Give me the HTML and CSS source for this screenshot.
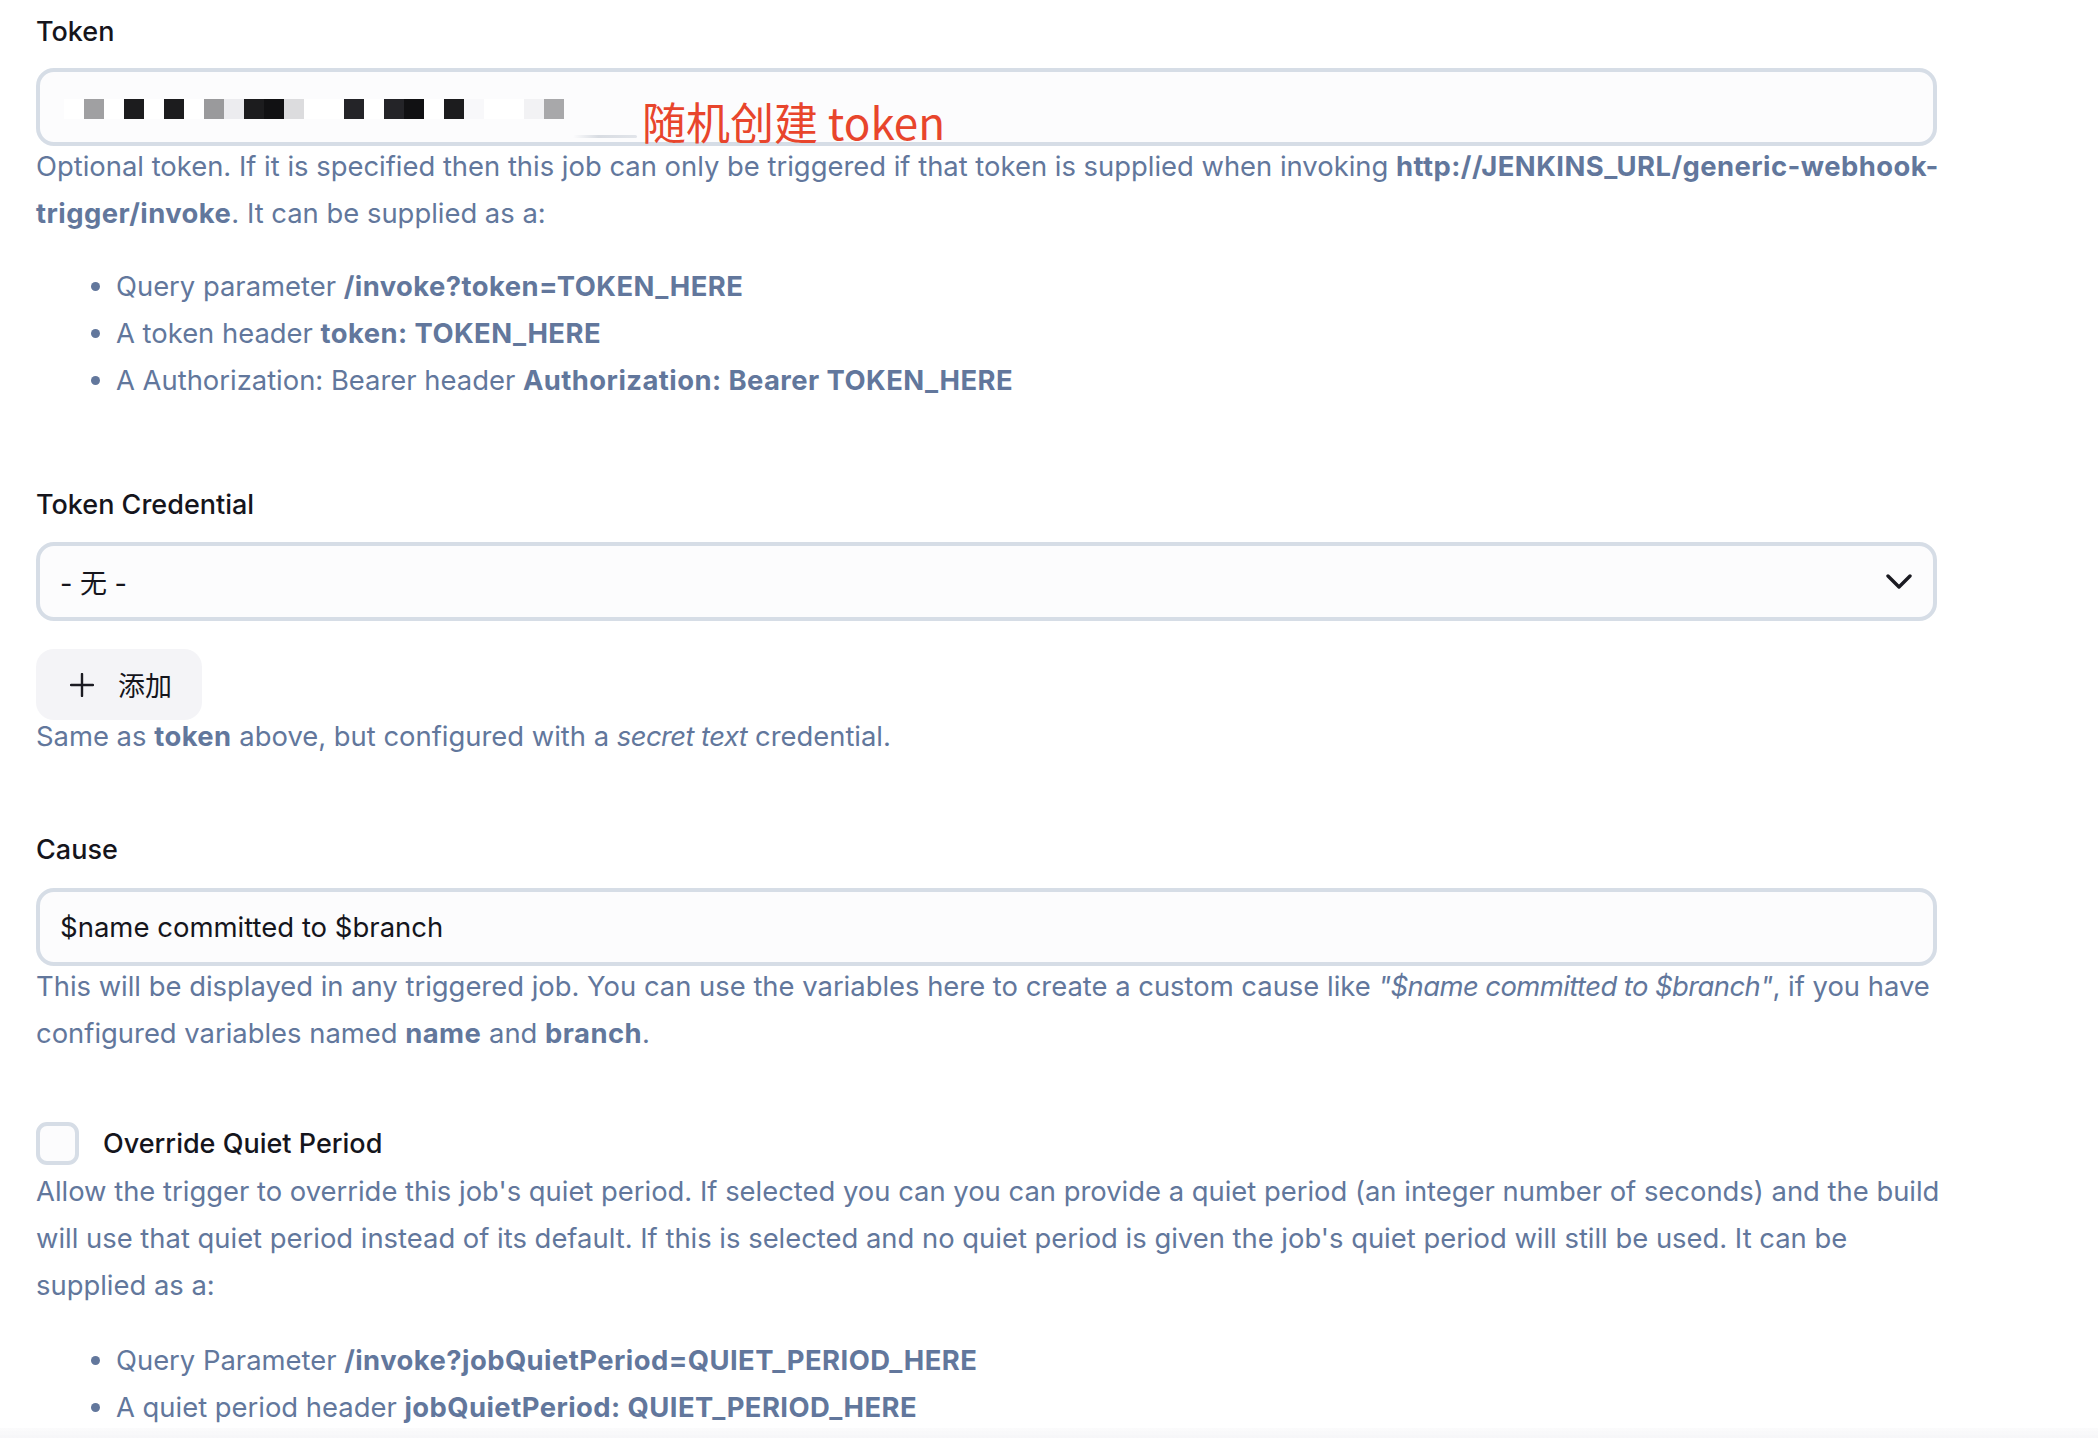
FILE: index.html
```html
<!DOCTYPE html>
<html lang="en">
<head>
<meta charset="utf-8">
<title>Generic Webhook Trigger</title>
<link rel="stylesheet" href="styles.css">
</head>
<body>
<main class="page">
  <section class="field field-token">
    <div class="label">Token</div>
    <div class="input token-input">
      <div class="mosaic">
        <span class="cell w"></span><span class="cell g"></span><span class="cell w"></span><span class="cell k"></span><span class="cell w"></span><span class="cell k"></span><span class="cell w"></span><span class="cell g2"></span><span class="cell l"></span><span class="cell k"></span><span class="cell kk"></span><span class="cell l2"></span><span class="cell w"></span><span class="cell w"></span><span class="cell k2"></span><span class="cell w"></span><span class="cell k2"></span><span class="cell kk"></span><span class="cell w"></span><span class="cell k"></span><span class="cell l3"></span><span class="cell w"></span><span class="cell w"></span><span class="cell l4"></span><span class="cell g3"></span>
      </div>
      <span class="smear"></span>
      <span class="annot">随机创建 token</span>
    </div>
    <div class="help">
      <p>Optional token. If it is specified then this job can only be triggered if that token is supplied when invoking <b>http://JENKINS_URL/generic-webhook-</b><br><b>trigger/invoke</b>. It can be supplied as a:</p>
      <ul>
        <li>Query parameter <b>/invoke?token=TOKEN_HERE</b></li>
        <li>A token header <b>token: TOKEN_HERE</b></li>
        <li>A Authorization: Bearer header <b>Authorization: Bearer TOKEN_HERE</b></li>
      </ul>
    </div>
  </section>

  <section class="field field-credential">
    <div class="label">Token Credential</div>
    <div class="input select">
      <span class="select-value">- 无 -</span>
      <svg class="chevron" width="26" height="16" viewBox="0 0 26 16"><path d="M2 2 L13 13 L24 2" fill="none" stroke="#1b1b22" stroke-width="3.4" stroke-linecap="round" stroke-linejoin="round"/></svg>
    </div>
    <button class="add-btn" type="button">
      <svg class="plus" width="24" height="24" viewBox="0 0 24 24"><path d="M12 1 V23 M1 12 H23" fill="none" stroke="#1b1b22" stroke-width="2.4" stroke-linecap="round"/></svg>
      <span>添加</span>
    </button>
    <div class="help help-tight">
      <p>Same as <b>token</b> above, but configured with a <i>secret text</i> credential.</p>
    </div>
  </section>

  <section class="field field-cause">
    <div class="label">Cause</div>
    <div class="input cause-input">$name committed to $branch</div>
    <div class="help">
      <p>This will be displayed in any triggered job. You can use the variables here to create a custom cause like <i>"$name committed to $branch"</i>, if you have<br>configured variables named <b>name</b> and <b>branch</b>.</p>
    </div>
  </section>

  <section class="field field-quiet">
    <label class="check-row">
      <span class="checkbox"></span>
      <span class="check-label">Override Quiet Period</span>
    </label>
    <div class="help help-check">
      <p>Allow the trigger to override this job's quiet period. If selected you can you can provide a quiet period (an integer number of seconds) and the build<br>will use that quiet period instead of its default. If this is selected and no quiet period is given the job's quiet period will still be used. It can be<br>supplied as a:</p>
      <ul class="list-quiet">
        <li>Query Parameter <b>/invoke?jobQuietPeriod=QUIET_PERIOD_HERE</b></li>
        <li>A quiet period header <b>jobQuietPeriod: QUIET_PERIOD_HERE</b></li>
      </ul>
    </div>
  </section>
</main>
<div class="bottom-fade"></div>
</body>
</html>
```

FILE: styles.css
```css
html, body {
  margin: 0;
  padding: 0;
  background: #ffffff;
}

.page {
  width: 1901px;
  padding: 14px 0 0 36px;
  font-family: Inter, "Noto Sans CJK SC", sans-serif;
  color: #15151c;
}

.label {
  font-size: 27px;
  line-height: 36px;
  font-weight: 500;
  color: #15151c;
}

.input {
  position: relative;
  box-sizing: border-box;
  height: 78px;
  border: 4px solid #d6dde6;
  border-radius: 18px;
  background: #fcfcfd;
  display: flex;
  align-items: center;
  padding: 0 20px;
  font-size: 27.5px;
  color: #15151c;
}

.token-input {
  margin-top: 18px;
  height: 78px;
  padding-left: 24px;
}

.mosaic {
  display: flex;
  margin-top: 3px;
  background: #ffffff;
}

.cell {
  width: 20px;
  height: 20px;
}
.cell.w { background: #ffffff; }
.cell.g { background: #a0a0a2; }
.cell.g2 { background: #9a9a9c; }
.cell.g3 { background: #a8a8aa; }
.cell.k { background: #1c1c1e; }
.cell.k2 { background: #242428; }
.cell.kk { background: #111113; }
.cell.l { background: #ececef; }
.cell.l2 { background: #dcdcde; }
.cell.l3 { background: #f8f8fa; }
.cell.l4 { background: #f2f2f4; }

.smear {
  position: absolute;
  left: 533px;
  top: 63px;
  width: 64px;
  height: 3px;
  border-radius: 2px;
  background: linear-gradient(90deg, rgba(210,214,220,0), #d8dce2 40%, #e2e5ea);
}

.annot {
  position: absolute;
  left: 602px;
  top: 25px;
  font-family: "Noto Sans CJK SC", sans-serif;
  font-size: 44px;
  line-height: 48px;
  color: #e8452c;
  white-space: nowrap;
}

.help {
  font-size: 27.4px;
  line-height: 47px;
  color: #62779c;
  margin-top: -3px;
}

.help p {
  margin: 0;
  white-space: nowrap;
}

.help li {
  white-space: nowrap;
}

.help b {
  font-weight: 700;
  letter-spacing: 0.45px;
}

.help i {
  letter-spacing: -0.55px;
}

.help ul {
  margin: 26px 0 0;
  padding-left: 80px;
}

.field-credential {
  margin-top: 83px;
}

.select {
  margin-top: 19px;
  height: 79px;
  justify-content: space-between;
  padding-right: 21px;
}

.select-value {
  font-size: 27px;
}

.chevron {
  display: block;
}

.add-btn {
  margin-top: 28px;
  height: 71px;
  box-sizing: border-box;
  display: inline-flex;
  align-items: center;
  gap: 24px;
  padding: 0 30px 0 34px;
  border: none;
  border-radius: 18px;
  background: #f4f4f7;
  font-family: "Noto Sans CJK SC", sans-serif;
  font-size: 27px;
  color: #15151c;
}

.plus {
  display: block;
}

.help-tight {
  margin-top: -7px;
}

.field-cause {
  margin-top: 72px;
}

.cause-input {
  margin-top: 20px;
  height: 78px;
}

.field-quiet {
  margin-top: 65px;
}

.check-row {
  display: flex;
  align-items: center;
  gap: 24px;
  height: 43px;
}

.checkbox {
  box-sizing: border-box;
  width: 43px;
  height: 43px;
  border: 4px solid #d6dde6;
  border-radius: 11px;
  background: #fcfcfd;
}

.check-label {
  font-size: 27px;
  font-weight: 500;
  color: #15151c;
}

.help-check {
  margin-top: 3px;
}

.help ul.list-quiet {
  margin-top: 28px;
}

.bottom-fade {
  position: fixed;
  left: 0;
  right: 0;
  bottom: 0;
  height: 10px;
  background: linear-gradient(180deg, rgba(246,246,248,0.4), #f6f6f8);
}
```
